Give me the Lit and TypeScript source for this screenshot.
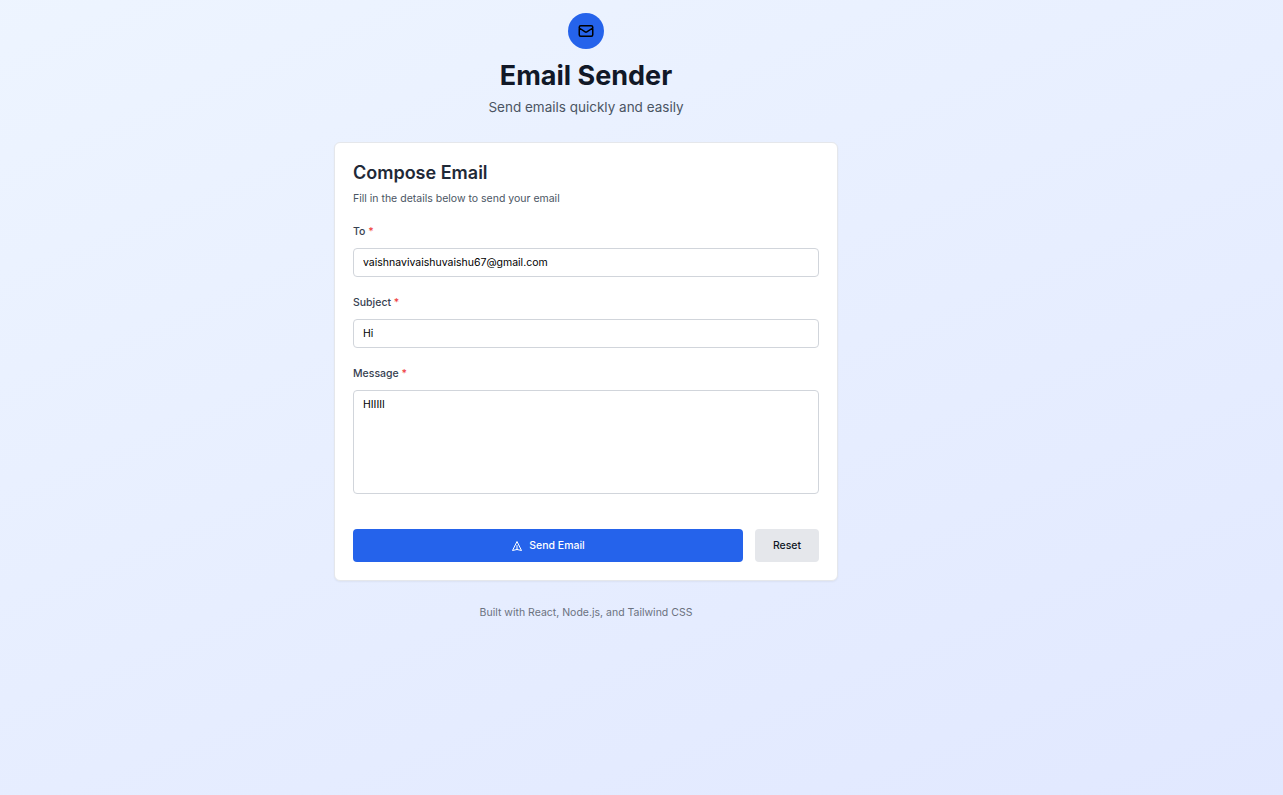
import { LitElement, html, css } from "lit";
import { customElement, property } from "lit/decorators.js";

@customElement("form-field")
class FormField extends LitElement {
  @property() label = "";
  @property() value = "";
  @property({ type: Boolean }) multiline = false;

  static styles = css`
    :host { display: block; }
    .label { display: block; height: 15px; line-height: 15px; font-size: 10.5px; font-weight: 500; color: #374151; margin-bottom: 9px; }
    .required { color: #ef4444; }
    .control {
      display: block; box-sizing: border-box; width: 100%; height: 29px; margin: 0; padding: 6px 9px;
      border: 1px solid #d1d5db; border-radius: 4px; background: #fff; color: #000;
      font-family: Inter, sans-serif; font-size: 10.5px; line-height: 15px; outline: none; resize: none;
    }
    .area { height: 104px; overflow: hidden; }
  `;

  render() {
    return html`
      <label class="label" for="control">${this.label} <span class="required">*</span></label>
      ${this.multiline
        ? html`<textarea id="control" class="control area" .value=${this.value}></textarea>`
        : html`<input id="control" class="control" .value=${this.value} />`}
    `;
  }
}

@customElement("app-root")
class AppRoot extends LitElement {
  static styles = css`
    :host {
      display: block; box-sizing: border-box; height: 795px; padding-top: 13px; overflow: hidden;
      background: linear-gradient(to bottom right, #eff6ff, #e0e7ff) -366px -11px / 1905px 816px no-repeat;
      font-family: Inter, sans-serif;
    }
    .page { width: 504px; margin-left: 334px; }
    .header { display: flex; flex-direction: column; align-items: center; margin-bottom: 24px; }
    .badge { width: 36px; height: 36px; border-radius: 50%; background: #2563eb; display: grid; place-items: center; margin-bottom: 12px; }
    .mail { width: 18px; height: 18px; color: #000; }
    h1, h2, p { margin: 0; }
    h1 { font-size: 27px; line-height: 30px; font-weight: 700; color: #111827; margin-bottom: 6px; }
    .tagline { font-size: 13.5px; line-height: 21px; color: #4b5563; }
    .card {
      box-sizing: border-box; height: 439px; padding: 18px; background: #fff;
      border: 1px solid #e5e7eb; border-radius: 6px; box-shadow: 0 1px 2px rgba(0, 0, 0, 0.05);
    }
    h2 { font-size: 18px; line-height: 24px; font-weight: 600; color: #1f2937; margin-bottom: 6px; }
    .hint { font-size: 10.5px; line-height: 15px; color: #4b5563; margin-bottom: 18px; }
    .fields { display: flex; flex-direction: column; gap: 18px; }
    .actions { display: flex; gap: 12px; margin-top: 35px; }
    .button {
      height: 33px; margin: 0; padding: 0 18px; border: 0; border-radius: 4px;
      display: flex; align-items: center; justify-content: center; gap: 6px;
      font-family: Inter, sans-serif; font-size: 10.5px; line-height: 15px; font-weight: 500;
    }
    .send { flex: 1; background: #2563eb; color: #fff; }
    .reset { width: 64px; padding: 0; background: #e5e7eb; color: #111827; }
    .plane { width: 12px; height: 12px; }
    .footer { margin-top: 24px; text-align: center; font-size: 10.5px; line-height: 15px; color: #6b7280; }
  `;

  render() {
    return html`
      <main class="page">
        <header class="header">
          <div class="badge">
            <svg class="mail" viewBox="0 0 24 24" fill="none" stroke="currentColor" stroke-width="2" stroke-linecap="round" stroke-linejoin="round">
              <path d="M3 8l7.89 5.26a2 2 0 002.22 0L21 8M5 19h14a2 2 0 002-2V7a2 2 0 00-2-2H5a2 2 0 00-2 2v10a2 2 0 002 2z" />
            </svg>
          </div>
          <h1>Email Sender</h1>
          <p class="tagline">Send emails quickly and easily</p>
        </header>
        <section class="card">
          <h2>Compose Email</h2>
          <p class="hint">Fill in the details below to send your email</p>
          <div class="fields">
            <form-field label="To" value="vaishnavivaishuvaishu67@gmail.com"></form-field>
            <form-field label="Subject" value="Hi"></form-field>
            <form-field label="Message" value="HIIIII" multiline></form-field>
          </div>
          <div class="actions">
            <button class="button send">
              <svg class="plane" viewBox="0 0 24 24" fill="none" stroke="currentColor" stroke-width="2" stroke-linecap="round" stroke-linejoin="round">
                <path d="M12 19l9 2-9-18-9 18 9-2zm0 0v-8" />
              </svg>
              Send Email
            </button>
            <button class="button reset">Reset</button>
          </div>
        </section>
        <footer class="footer">Built with React, Node.js, and Tailwind CSS</footer>
      </main>
    `;
  }
}
